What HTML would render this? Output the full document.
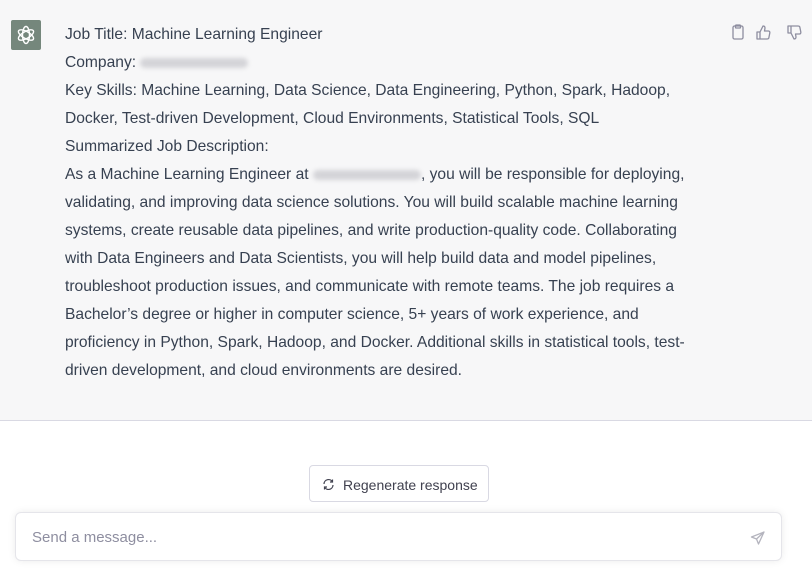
<!DOCTYPE html>
<html><head><style>
body{margin:0;width:812px;height:570px;background:#fff;font-family:"Liberation Sans",Arial,sans-serif;position:relative;overflow:hidden}
.msg{position:absolute;left:0;top:0;width:812px;height:420px;background:#f7f7f8;border-bottom:1px solid #d9d9e3}
.av{position:absolute;left:11px;top:20px;width:30px;height:30px;background:#75877c;border-radius:2px}
.txt{position:absolute;left:65px;top:21px;font-size:15.6px;line-height:28px;color:#374151;white-space:nowrap}
.blur{display:inline-block;background:#d4d4d8;filter:blur(2px);height:10px;border-radius:5px;vertical-align:middle}
.icons{position:absolute;top:24px;left:731px}
.btn{position:absolute;left:309px;top:465px;width:180px;height:37px;border:1px solid #d9d9e3;border-radius:4px;background:#fff;font-size:14px;color:#40414f;box-sizing:border-box}
.btn span{position:absolute;left:33px;top:11px}
.inp{position:absolute;left:15px;top:512px;width:767px;height:49px;border:1px solid #e5e5ea;border-radius:6px;box-shadow:0 0 8px rgba(0,0,0,0.08);box-sizing:border-box;background:#fff}
.inp span{position:absolute;left:16px;top:16px;font-size:15px;color:#8e8ea0}
</style></head><body>
<div class="msg">
<div class="av"><svg width="30" height="30" viewBox="0 0 30 30"><g fill="none" stroke="#fff" stroke-width="1.4"><ellipse cx="15" cy="15" rx="3.5" ry="8.5"/><ellipse cx="15" cy="15" rx="3.5" ry="8.5" transform="rotate(60 15 15)"/><ellipse cx="15" cy="15" rx="3.5" ry="8.5" transform="rotate(120 15 15)"/></g></svg></div>
<div class="txt">Job Title: Machine Learning Engineer<br>Company: <span class="blur" style="width:108px"></span><br>Key Skills: Machine Learning, Data Science, Data Engineering, Python, Spark, Hadoop,<br>Docker, Test-driven Development, Cloud Environments, Statistical Tools, SQL<br>Summarized Job Description:<br>As a Machine Learning Engineer at <span class="blur" style="width:108px"></span>, you will be responsible for deploying,<br>validating, and improving data science solutions. You will build scalable machine learning<br>systems, create reusable data pipelines, and write production-quality code. Collaborating<br>with Data Engineers and Data Scientists, you will help build data and model pipelines,<br>troubleshoot production issues, and communicate with remote teams. The job requires a<br>Bachelor’s degree or higher in computer science, 5+ years of work experience, and<br>proficiency in Python, Spark, Hadoop, and Docker. Additional skills in statistical tools, test-<br>driven development, and cloud environments are desired.</div>
<div class="icons"><svg width="72" height="18" viewBox="0 0 72 18" fill="none" stroke="#8e8ea0" stroke-width="1.3" stroke-linejoin="round"><rect x="2" y="2" width="10" height="13" rx="1.5"/><rect x="4.5" y="1" width="5" height="3" rx="0.8"/><path d="M29 8v7h-3V8zM29 8l3-6c1.5 0 2 1 2 2l-.5 3h4c1 0 1.5 1 1.3 2l-1 5c-.2 1-1 1-2 1H29"/><path d="M60 9V2h-3v7zM60 9l3 6c1.5 0 2-1 2-2l-.5-3h4c1 0 1.5-1 1.3-2l-1-5c-.2-1-1-1-2-1H60"/></svg></div>
</div>
<div class="btn"><svg style="position:absolute;left:12px;top:12px" width="13" height="13" viewBox="0 0 13 13" fill="none" stroke="#40414f" stroke-width="1.2"><path d="M2 6A4.5 4.5 0 0 1 10.5 4M11 7A4.5 4.5 0 0 1 2.5 9"/><path d="M10.5 1.5v2.5H8M2.5 11.5V9H5"/></svg><span>Regenerate response</span></div>
<div class="inp"><span>Send a message...</span><svg style="position:absolute;left:734px;top:17px" width="16" height="16" viewBox="0 0 16 16" fill="none" stroke="#b4b4be" stroke-width="1.3" stroke-linejoin="round"><path d="M14 2L1.5 7l5 2 2 5zM14 2L6.5 9"/></svg></div>
</body></html>
